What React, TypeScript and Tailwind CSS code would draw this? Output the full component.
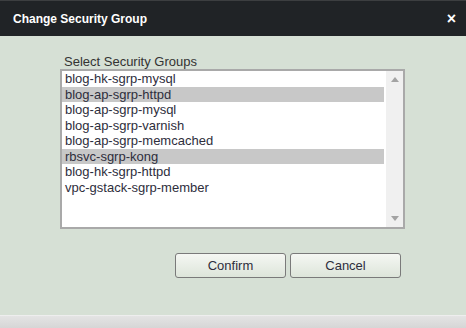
import React from 'react';

const groups = [
  { name: 'blog-hk-sgrp-mysql', selected: false },
  { name: 'blog-ap-sgrp-httpd', selected: true },
  { name: 'blog-ap-sgrp-mysql', selected: false },
  { name: 'blog-ap-sgrp-varnish', selected: false },
  { name: 'blog-ap-sgrp-memcached', selected: false },
  { name: 'rbsvc-sgrp-kong', selected: true },
  { name: 'blog-hk-sgrp-httpd', selected: false },
  { name: 'vpc-gstack-sgrp-member', selected: false },
];

const App: React.FC = () => {
  return (
    <div className="flex h-screen w-full flex-col bg-[#d6e0d5] font-['Liberation_Sans',Arial,sans-serif]">
      {/* Header */}
      <div className="flex h-9 items-center justify-between border-t border-[#3c3e40] bg-[#202326] pl-[13px] pr-[10px]">
        <h2 className="text-[12px] font-bold text-white">Change Security Group</h2>
        <span className="text-[16px] font-bold leading-none text-white">×</span>
      </div>

      {/* Body */}
      <div className="flex flex-1 flex-col pl-[60px] pt-[19px]">
        <label className="pl-[4px] text-[13px] leading-[14px] text-[#333]">Select Security Groups</label>
        <div className="flex h-[160px] w-[345px] border-2 border-[#a9a9a9] bg-white">
          <ul className="flex-1 pr-[2px]">
            {groups.map((g) => (
              <li
                key={g.name}
                className={`h-[15.5px] pl-[3px] text-[13px] leading-[15.5px] text-[#2e2e3c] ${g.selected ? 'bg-[#c8c8c8]' : ''}`}
              >
                {g.name}
              </li>
            ))}
          </ul>
          {/* Scrollbar */}
          <div className="flex w-[17px] flex-col items-center justify-between bg-[#f0f0f0] pb-[6px] pt-[6px]">
            <svg width="8" height="5" viewBox="0 0 8 5">
              <path d="M4 0 L8 5 L0 5 Z" fill="#a3a3a3" />
            </svg>
            <svg width="8" height="5" viewBox="0 0 8 5">
              <path d="M0 0 L8 0 L4 5 Z" fill="#a3a3a3" />
            </svg>
          </div>
        </div>

        <div className="mt-[24px] flex gap-[4px] pl-[115px]">
          <button className="h-[25px] w-[111px] rounded-[3px] border border-[#7a7a7a] bg-gradient-to-b from-[#f5f7f3] to-[#dde5da] text-[13px] text-[#2e2e3c]">
            Confirm
          </button>
          <button className="h-[25px] w-[111px] rounded-[3px] border border-[#7a7a7a] bg-gradient-to-b from-[#f5f7f3] to-[#dde5da] text-[13px] text-[#2e2e3c]">
            Cancel
          </button>
        </div>
      </div>

      {/* Footer strip */}
      <div className="h-[13px] border-t border-[#eeeeee] bg-gradient-to-b from-[#e4e4e4] to-[#d6d6d6]" />
    </div>
  );
};

export default App;
